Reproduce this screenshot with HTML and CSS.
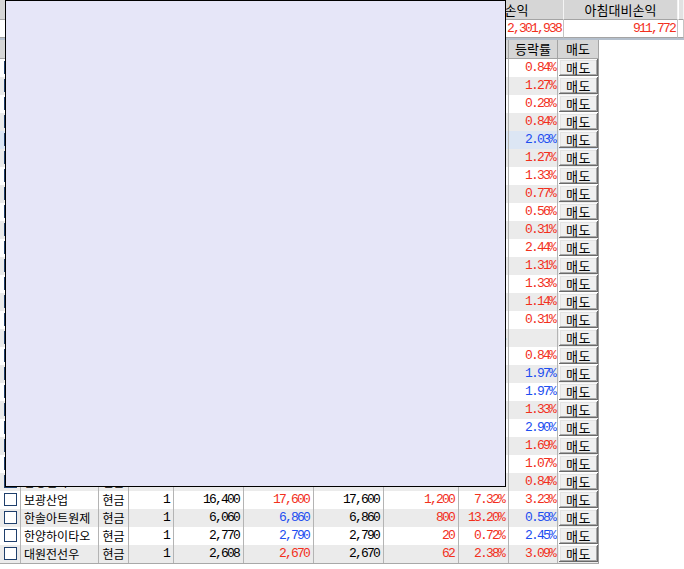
FILE: index.html
```html
<!DOCTYPE html>
<html lang="ko">
<head>
<meta charset="utf-8">
<title>잔고</title>
<link rel="stylesheet" href="styles.css">
</head>
<body>
<div class="page">
  <div class="summary">
    <div class="sum-row sum-head">
      <div class="c">평가금액</div><div class="c">손익</div><div class="c">아침대비손익</div><div class="c edge"></div>
    </div>
    <div class="sum-row sum-val">
      <div class="c n">1,842,560</div><div class="c n up">2,301,938</div><div class="c n up">911,772</div><div class="c edge"></div>
    </div>
    <div class="sep"></div>
  </div>

  <div class="grid">
    <div class="cols ghead">
      <div class="c"></div><div class="c">종목명</div><div class="c">구분</div><div class="c">수량</div><div class="c">매입가</div><div class="c">현재가</div><div class="c">매도가</div><div class="c">평가손익</div><div class="c">수익률</div><div class="c">등락률</div><div class="c">매도</div>
    </div>

    <div class="cols row"><div class="c ck"><i></i></div><div class="c nm">대한전선</div><div class="c ty">현금</div><div class="c n">1</div><div class="c n">3,450</div><div class="c n up">3,590</div><div class="c n">3,590</div><div class="c n up">140</div><div class="c n up">4.06%</div><div class="c n chg up">0.84%</div><div class="c bt"><button class="sell">매도</button></div></div>
    <div class="cols row alt"><div class="c ck"><i></i></div><div class="c nm">동양철관</div><div class="c ty">현금</div><div class="c n">1</div><div class="c n">1,120</div><div class="c n up">1,180</div><div class="c n">1,180</div><div class="c n up">60</div><div class="c n up">5.36%</div><div class="c n chg up">1.27%</div><div class="c bt"><button class="sell">매도</button></div></div>
    <div class="cols row"><div class="c ck"><i></i></div><div class="c nm">삼화전자</div><div class="c ty">현금</div><div class="c n">1</div><div class="c n">5,210</div><div class="c n up">5,300</div><div class="c n">5,300</div><div class="c n up">90</div><div class="c n up">1.73%</div><div class="c n chg up">0.28%</div><div class="c bt"><button class="sell">매도</button></div></div>
    <div class="cols row alt"><div class="c ck"><i></i></div><div class="c nm">대유에이텍</div><div class="c ty">현금</div><div class="c n">1</div><div class="c n">4,420</div><div class="c n up">4,510</div><div class="c n">4,510</div><div class="c n up">90</div><div class="c n up">2.04%</div><div class="c n chg up">0.84%</div><div class="c bt"><button class="sell">매도</button></div></div>
    <div class="cols row sel"><div class="c ck"><i></i></div><div class="c nm">세원정공</div><div class="c ty">현금</div><div class="c n">1</div><div class="c n">9,450</div><div class="c n dn">9,650</div><div class="c n">9,650</div><div class="c n up">200</div><div class="c n up">2.12%</div><div class="c n chg dn">2.03%</div><div class="c bt"><button class="sell">매도</button></div></div>
    <div class="cols row alt"><div class="c ck"><i></i></div><div class="c nm">우리들제약</div><div class="c ty">현금</div><div class="c n">1</div><div class="c n">7,580</div><div class="c n up">7,960</div><div class="c n">7,960</div><div class="c n up">380</div><div class="c n up">5.01%</div><div class="c n chg up">1.27%</div><div class="c bt"><button class="sell">매도</button></div></div>
    <div class="cols row"><div class="c ck"><i></i></div><div class="c nm">서원</div><div class="c ty">현금</div><div class="c n">1</div><div class="c n">2,180</div><div class="c n up">2,290</div><div class="c n">2,290</div><div class="c n up">110</div><div class="c n up">5.05%</div><div class="c n chg up">1.33%</div><div class="c bt"><button class="sell">매도</button></div></div>
    <div class="cols row alt"><div class="c ck"><i></i></div><div class="c nm">한국주철관</div><div class="c ty">현금</div><div class="c n">1</div><div class="c n">6,270</div><div class="c n up">6,510</div><div class="c n">6,510</div><div class="c n up">240</div><div class="c n up">3.83%</div><div class="c n chg up">0.77%</div><div class="c bt"><button class="sell">매도</button></div></div>
    <div class="cols row"><div class="c ck"><i></i></div><div class="c nm">동국산업</div><div class="c ty">현금</div><div class="c n">1</div><div class="c n">3,500</div><div class="c n up">3,580</div><div class="c n">3,580</div><div class="c n up">80</div><div class="c n up">2.29%</div><div class="c n chg up">0.56%</div><div class="c bt"><button class="sell">매도</button></div></div>
    <div class="cols row alt"><div class="c ck"><i></i></div><div class="c nm">삼일기업</div><div class="c ty">현금</div><div class="c n">1</div><div class="c n">3,180</div><div class="c n up">3,230</div><div class="c n">3,230</div><div class="c n up">50</div><div class="c n up">1.57%</div><div class="c n chg up">0.31%</div><div class="c bt"><button class="sell">매도</button></div></div>
    <div class="cols row"><div class="c ck"><i></i></div><div class="c nm">대창단조</div><div class="c ty">현금</div><div class="c n">1</div><div class="c n">8,030</div><div class="c n up">8,400</div><div class="c n">8,400</div><div class="c n up">370</div><div class="c n up">4.61%</div><div class="c n chg up">2.44%</div><div class="c bt"><button class="sell">매도</button></div></div>
    <div class="cols row alt"><div class="c ck"><i></i></div><div class="c nm">성안</div><div class="c ty">현금</div><div class="c n">1</div><div class="c n">1,490</div><div class="c n up">1,545</div><div class="c n">1,545</div><div class="c n up">55</div><div class="c n up">3.69%</div><div class="c n chg up">1.31%</div><div class="c bt"><button class="sell">매도</button></div></div>
    <div class="cols row"><div class="c ck"><i></i></div><div class="c nm">신성통상</div><div class="c ty">현금</div><div class="c n">1</div><div class="c n">2,200</div><div class="c n up">2,285</div><div class="c n">2,285</div><div class="c n up">85</div><div class="c n up">3.86%</div><div class="c n chg up">1.33%</div><div class="c bt"><button class="sell">매도</button></div></div>
    <div class="cols row alt"><div class="c ck"><i></i></div><div class="c nm">대림제지</div><div class="c ty">현금</div><div class="c n">1</div><div class="c n">4,150</div><div class="c n up">4,410</div><div class="c n">4,410</div><div class="c n up">260</div><div class="c n up">6.27%</div><div class="c n chg up">1.14%</div><div class="c bt"><button class="sell">매도</button></div></div>
    <div class="cols row"><div class="c ck"><i></i></div><div class="c nm">영보화학</div><div class="c ty">현금</div><div class="c n">1</div><div class="c n">3,120</div><div class="c n up">3,240</div><div class="c n">3,240</div><div class="c n up">120</div><div class="c n up">3.85%</div><div class="c n chg up">0.31%</div><div class="c bt"><button class="sell">매도</button></div></div>
    <div class="cols row alt"><div class="c ck"><i></i></div><div class="c nm">일신석재</div><div class="c ty">현금</div><div class="c n">1</div><div class="c n">1,050</div><div class="c n">1,050</div><div class="c n">1,050</div><div class="c n">0</div><div class="c n">0.00%</div><div class="c n chg"></div><div class="c bt"><button class="sell">매도</button></div></div>
    <div class="cols row"><div class="c ck"><i></i></div><div class="c nm">조광피혁</div><div class="c ty">현금</div><div class="c n">1</div><div class="c n">5,540</div><div class="c n up">5,990</div><div class="c n">5,990</div><div class="c n up">450</div><div class="c n up">8.12%</div><div class="c n chg up">0.84%</div><div class="c bt"><button class="sell">매도</button></div></div>
    <div class="cols row alt"><div class="c ck"><i></i></div><div class="c nm">한창제지</div><div class="c ty">현금</div><div class="c n">1</div><div class="c n">1,380</div><div class="c n dn">1,490</div><div class="c n">1,490</div><div class="c n up">110</div><div class="c n up">7.97%</div><div class="c n chg dn">1.97%</div><div class="c bt"><button class="sell">매도</button></div></div>
    <div class="cols row"><div class="c ck"><i></i></div><div class="c nm">한창제지</div><div class="c ty">현금</div><div class="c n">1</div><div class="c n">1,400</div><div class="c n dn">1,490</div><div class="c n">1,490</div><div class="c n up">90</div><div class="c n up">6.43%</div><div class="c n chg dn">1.97%</div><div class="c bt"><button class="sell">매도</button></div></div>
    <div class="cols row alt"><div class="c ck"><i></i></div><div class="c nm">경남제약</div><div class="c ty">현금</div><div class="c n">1</div><div class="c n">6,720</div><div class="c n up">6,850</div><div class="c n">6,850</div><div class="c n up">130</div><div class="c n up">1.93%</div><div class="c n chg up">1.33%</div><div class="c bt"><button class="sell">매도</button></div></div>
    <div class="cols row"><div class="c ck"><i></i></div><div class="c nm">금호전기</div><div class="c ty">현금</div><div class="c n">1</div><div class="c n">9,800</div><div class="c n dn">10,050</div><div class="c n">10,050</div><div class="c n up">250</div><div class="c n up">2.55%</div><div class="c n chg dn">2.90%</div><div class="c bt"><button class="sell">매도</button></div></div>
    <div class="cols row alt"><div class="c ck"><i></i></div><div class="c nm">대호에이엘</div><div class="c ty">현금</div><div class="c n">1</div><div class="c n">2,310</div><div class="c n up">2,410</div><div class="c n">2,410</div><div class="c n up">100</div><div class="c n up">4.33%</div><div class="c n chg up">1.69%</div><div class="c bt"><button class="sell">매도</button></div></div>
    <div class="cols row"><div class="c ck"><i></i></div><div class="c nm">삼원강재</div><div class="c ty">현금</div><div class="c n">1</div><div class="c n">4,560</div><div class="c n up">4,720</div><div class="c n">4,720</div><div class="c n up">160</div><div class="c n up">3.51%</div><div class="c n chg up">1.07%</div><div class="c bt"><button class="sell">매도</button></div></div>
    <div class="cols row alt"><div class="c ck"><i></i></div><div class="c nm">삼영전자</div><div class="c ty">현금</div><div class="c n">1</div><div class="c n">8,290</div><div class="c n up">9,350</div><div class="c n">9,350</div><div class="c n up">1,060</div><div class="c n up">12.79%</div><div class="c n chg up">0.84%</div><div class="c bt"><button class="sell">매도</button></div></div>
    <div class="cols row"><div class="c ck"><i></i></div><div class="c nm">보광산업</div><div class="c ty">현금</div><div class="c n">1</div><div class="c n">16,400</div><div class="c n up">17,600</div><div class="c n">17,600</div><div class="c n up">1,200</div><div class="c n up">7.32%</div><div class="c n chg up">3.23%</div><div class="c bt"><button class="sell">매도</button></div></div>
    <div class="cols row alt"><div class="c ck"><i></i></div><div class="c nm">한솔아트원제</div><div class="c ty">현금</div><div class="c n">1</div><div class="c n">6,060</div><div class="c n dn">6,860</div><div class="c n">6,860</div><div class="c n up">800</div><div class="c n up">13.20%</div><div class="c n chg dn">0.58%</div><div class="c bt"><button class="sell">매도</button></div></div>
    <div class="cols row"><div class="c ck"><i></i></div><div class="c nm">한양하이타오</div><div class="c ty">현금</div><div class="c n">1</div><div class="c n">2,770</div><div class="c n dn">2,790</div><div class="c n">2,790</div><div class="c n up">20</div><div class="c n up">0.72%</div><div class="c n chg dn">2.45%</div><div class="c bt"><button class="sell">매도</button></div></div>
    <div class="cols row alt"><div class="c ck"><i></i></div><div class="c nm">대원전선우</div><div class="c ty">현금</div><div class="c n">1</div><div class="c n">2,608</div><div class="c n up">2,670</div><div class="c n">2,670</div><div class="c n up">62</div><div class="c n up">2.38%</div><div class="c n chg up">3.09%</div><div class="c bt"><button class="sell">매도</button></div></div>
  </div>

  <div class="overlay"></div>
</div>
</body>
</html>
```

FILE: styles.css
```css
html, body {
  margin: 0;
  padding: 0;
  background: #fff;
}

body {
  font-family: "Noto Sans CJK KR", "Noto Sans", sans-serif;
  font-size: 12px;
  color: #000;
  overflow: hidden;
}

.page {
  position: relative;
  width: 684px;
  height: 569px;
  overflow: hidden;
}

/* ---------- summary strip ---------- */
.sum-row {
  display: grid;
  grid-template-columns: 470px 94px 114px 1fr;
}

.c {
  box-sizing: border-box;
  white-space: nowrap;
  overflow: hidden;
}

.sum-head .c {
  height: 20px;
  line-height: 19px;
  background: #d6d6d6;
  border-right: 1px solid #f4f4f4;
  border-bottom: 1px solid #a4a4a4;
  text-align: center;
  font-size: 13px;
}

.sum-head .edge {
  background: #e2e2e2;
  border-left: 1px solid #fff;
}

.sum-val .c {
  height: 18px;
  line-height: 18px;
  background: #fff;
  border-right: 1px solid #c4c4c4;
  border-bottom: 1px solid #a4a4a4;
}

.sum-val .n {
  padding-right: 2px;
}

.sep {
  height: 2px;
  background: #b4bfcc;
}

/* ---------- grid ---------- */
.grid {
  width: 599px;
  border-bottom: 1px solid #a8a8a8;
}

.cols {
  display: grid;
  grid-template-columns: 21px 78px 30px 45px 70px 70px 70px 75px 50px 49px 41px;
}

.ghead .c {
  height: 19px;
  line-height: 18px;
  background: #d6d6d6;
  border-right: 1px solid #a4a4a4;
  border-bottom: 1px solid #a4a4a4;
  text-align: center;
  font-size: 13px;
}

.row {
  background: #fff;
}

.row.alt {
  background: #ebebeb;
}

.row.sel {
  background: #dce6f4;
}

.row .c {
  height: 18px;
  line-height: 18px;
  border-right: 1px solid #b4b4b4;
}

.nm {
  padding-left: 3px;
}

.ty {
  text-align: center;
}

.n {
  text-align: right;
  padding-right: 4px;
  font-family: "Liberation Mono", monospace;
  font-size: 13px;
  letter-spacing: -1.8px;
}

.row .chg {
  padding-right: 2px;
}

.up {
  color: #f2301c;
}

.dn {
  color: #1c4ef0;
}

.ck i {
  display: block;
  width: 13px;
  height: 13px;
  box-sizing: border-box;
  margin: 2px 0 0 4px;
  background: #fff;
  border: 1px solid #1f3f6c;
}

.row .bt {
  padding: 0 0 0 1px;
  border-right: 1px solid #9a9a9a;
}

.sell {
  display: block;
  width: 39px;
  height: 17px;
  margin: 0;
  padding: 0;
  border: none;
  background: #f0f0f0;
  box-shadow: inset -1px -1px #6a6a6a, inset 1px 1px #fafafa, inset -2px -2px #a8a8a8, inset 2px 2px #e4e4e4;
  font-family: "Noto Sans CJK KR", sans-serif;
  font-size: 13px;
  line-height: 16px;
  letter-spacing: 0.5px;
  color: #000;
}

/* ---------- floating panel ---------- */
.overlay {
  position: absolute;
  left: 5px;
  top: 0;
  width: 501px;
  height: 487px;
  box-sizing: border-box;
  border: 1px solid #000;
  background: #e6e6f8;
}
```
